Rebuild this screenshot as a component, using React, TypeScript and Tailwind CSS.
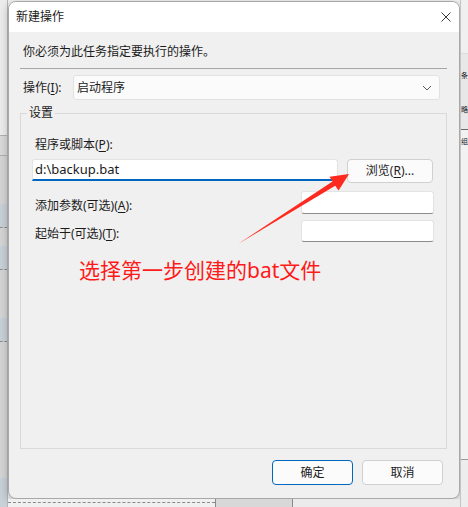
import { FC } from "react";

const Mn: FC<{ k: string }> = ({ k }) => <span className="underline underline-offset-2">{k}</span>;

const TextBox: FC<{ className?: string }> = ({ className }) => (
  <div
    className={`rounded-[3px] border border-[#e3e3e3] border-b-[#8c8c8c] bg-white ${className ?? ""}`}
  />
);

const LeftStrip: FC = () => (
  <div className="flex w-[8px] flex-col border-r border-[#b8b8b8]">
    <div className="h-[135px] bg-[#ececec]" />
    <div className="h-[20px] border-t border-[#b0b0b0] bg-[#d9d9d9]" />
    <div className="h-[49px] border-t border-[#b0b0b0] bg-[#d4d4d4]" />
    <div className="h-[24px] border-b border-dashed border-[#8a8a8a] bg-[#c8d0d8]" />
    <div className="h-[18px] bg-[#d4d4d4]" />
    <div className="h-[24px] border-b border-dashed border-[#8a8a8a] bg-[#c8d0d8]" />
    <div className="h-[48px] bg-[#d4d4d4]" />
    <div className="h-[24px] border-b border-dashed border-[#8a8a8a] bg-[#c8d0d8]" />
    <div className="h-[136px] bg-[#d4d4d4]" />
    <div className="flex-1 bg-[#c8d0d8]" />
  </div>
);

const RightStrip: FC = () => (
  <div className="flex w-[8px] flex-col overflow-hidden border-l border-[#c4c4c4] text-[7px] leading-[8px] text-[#222]">
    <div className="h-[53px] bg-[#f0f0f0]" />
    <div className="h-[76px] border-t border-[#dcdcdc] bg-[#e8e8e8] pt-[18px]">
      <div>条</div>
      <div className="mt-[26px]">略</div>
    </div>
    <div className="h-[330px] border-t border-[#6a6a6a] bg-[#f2f2f2] pt-[8px]">
      <div>组</div>
    </div>
    <div className="flex-1 border-t border-[#9a9a9a] bg-[#ededed]" />
  </div>
);

const App: FC = () => {
  return (
    <div className="relative flex h-[507px] w-[468px] overflow-hidden bg-[#f0f0f0] font-['Noto_Sans','Noto_Sans_CJK_SC',sans-serif] text-[12px] text-[#1b1b1b]">
      <LeftStrip />
      <div className="flex w-[452px] flex-col">
        <div className="h-px bg-[#f4f4f4]" />
        <div className="flex h-[498px] flex-col overflow-hidden rounded-[8px] border border-[#a8a8a8] bg-[#f0f0f0] shadow-[0_2px_8px_rgba(0,0,0,0.25)]">
          <div className="flex h-[30px] items-center justify-between bg-white pl-[7px] pr-[7px]">
            <span className="leading-[16px]">新建操作</span>
            <svg width="12" height="12" viewBox="0 0 12 12" className="text-[#222]">
              <path d="M1.5 1.5 L10.5 10.5 M10.5 1.5 L1.5 10.5" stroke="currentColor" strokeWidth="0.9" fill="none" />
            </svg>
          </div>

          <div className="mt-[12px] pl-[14px] leading-[16px]">你必须为此任务指定要执行的操作。</div>
          <div className="ml-[11px] mt-[8px] h-px w-[427px] bg-[#a6a6a6]" />

          <div className="mt-[6px] flex h-[25px] items-center">
            <span className="w-[64px] pl-[14px] leading-[16px]">
              操作(<Mn k="I" />):
            </span>
            <div className="flex h-[25px] w-[367px] items-center justify-between rounded-[3px] border border-[#e2e2e2] bg-[#fbfbfb] pl-[3px] pr-[7px]">
              <span>启动程序</span>
              <svg width="10" height="6" viewBox="0 0 10 6">
                <path d="M1 1 L5 5 L9 1" stroke="#5a5a5a" strokeWidth="1" fill="none" />
              </svg>
            </div>
          </div>

          <fieldset className="ml-[11px] mt-[5px] h-[344px] w-[427px] border border-[#d9d9d9] pl-[11px]">
            <legend className="ml-[-5px] px-[2px] leading-[16px]">设置</legend>
            <div className="mt-[16px] pl-[3px] leading-[16px]">
              程序或脚本(<Mn k="P" />):
            </div>
            <div className="mt-[6px] flex items-start gap-[9px]">
              <div className="flex h-[22px] w-[306px] items-center rounded-t-[3px] border border-[#e3e3e3] border-b-2 border-b-[#0067c0] bg-white pl-[2px] text-[13px]">
                d:\backup.bat
              </div>
              <button className="flex h-[24px] w-[86px] items-center justify-center rounded-[4px] border border-[#d0d0d0] bg-[#fbfbfb]">
                浏览(<Mn k="R" />)...
              </button>
            </div>
            <div className="mt-[8px] flex items-end">
              <span className="w-[269px] pl-[3px] leading-[16px]">
                添加参数(可选)(<Mn k="A" />):
              </span>
              <TextBox className="h-[23px] w-[133px]" />
            </div>
            <div className="mt-[6px] flex items-end">
              <span className="w-[269px] pl-[3px] leading-[16px]">
                起始于(可选)(<Mn k="T" />):
              </span>
              <TextBox className="h-[22px] w-[133px]" />
            </div>
            <div className="ml-[47px] mt-[15px] text-[21px] leading-[26px] text-[#ff1a1a]">
              选择第一步创建的bat文件
            </div>
          </fieldset>

          <div className="mt-[11px] flex justify-end gap-[9px] pr-[16px]">
            <button className="flex h-[25px] w-[81px] items-center justify-center rounded-[4px] border border-[#0067c0] bg-[#fbfbfb]">
              确定
            </button>
            <button className="flex h-[25px] w-[81px] items-center justify-center rounded-[4px] border border-[#d0d0d0] bg-[#fbfbfb]">
              取消
            </button>
          </div>
        </div>
        <div className="flex flex-1">
          <div className="w-[207px] bg-[#f0f0f0] pt-[3px]">
            <div className="border-t border-dashed border-[#8a8a8a]" />
          </div>
          <div className="w-[78px] border-x border-[#8a8a8a] bg-[#d8d8d8]" />
          <div className="flex-1 bg-[#ebebeb]" />
        </div>
      </div>
      <RightStrip />

      <svg
        className="pointer-events-none absolute inset-0"
        width="468"
        height="507"
        viewBox="0 0 468 507"
      >
        <polygon
          points="238,244 332.5,181.5 329.5,176.8 349,174 338.6,190.6 335.2,185.8"
          fill="#ff2a1f"
        />
      </svg>
    </div>
  );
};

export default App;
